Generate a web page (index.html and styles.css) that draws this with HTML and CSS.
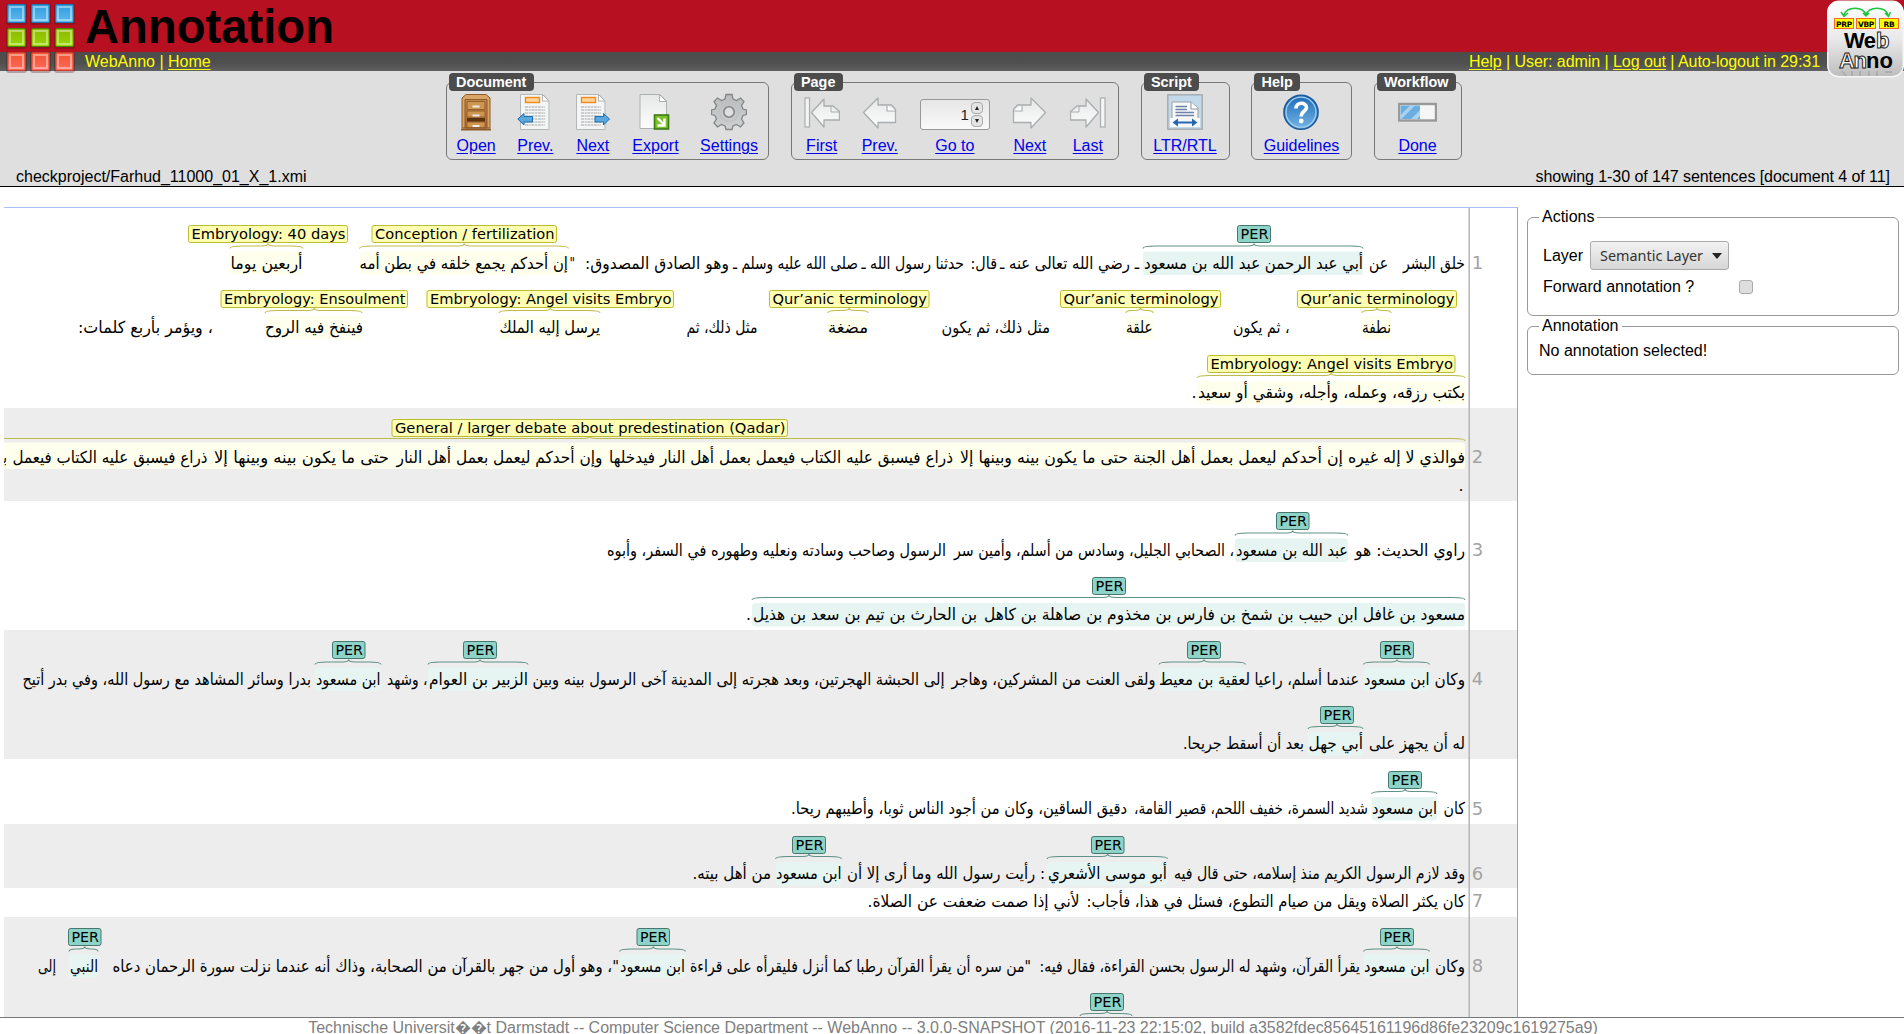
FILE: index.html
```html
<!DOCTYPE html>
<html lang="en">
<head>
<meta charset="utf-8">
<title>Annotation</title>
<link rel="stylesheet" href="styles.css">
</head>
<body>
<svg class="defs" width="0" height="0" aria-hidden="true">
  <defs>
    <linearGradient id="blue" x1="0" y1="0" x2="0" y2="1"><stop offset="0" stop-color="#2f9de0"/><stop offset="1" stop-color="#5cb8ee"/></linearGradient>
    <linearGradient id="green" x1="0" y1="0" x2="0" y2="1"><stop offset="0" stop-color="#8db800"/><stop offset="1" stop-color="#99d800"/></linearGradient>
    <linearGradient id="coral" x1="0" y1="0" x2="0" y2="1"><stop offset="0" stop-color="#f0532f"/><stop offset="1" stop-color="#ff6a5c"/></linearGradient>
    <linearGradient id="paper" x1="0" y1="0" x2="0" y2="1"><stop offset="0" stop-color="#e6e8e8"/><stop offset="1" stop-color="#fcfcfc"/></linearGradient>
    <linearGradient id="wood" x1="0" y1="0" x2="0" y2="1"><stop offset="0" stop-color="#c08a52"/><stop offset="1" stop-color="#a8662c"/></linearGradient>
    <linearGradient id="help" x1="0" y1="0" x2="0" y2="1"><stop offset="0" stop-color="#1c6ab8"/><stop offset="1" stop-color="#74b6e6"/></linearGradient>
    <linearGradient id="gear" x1="0" y1="0" x2="0" y2="1"><stop offset="0" stop-color="#b9bbbc"/><stop offset="1" stop-color="#cfd0d1"/></linearGradient>
    <linearGradient id="plate" x1="0" y1="0" x2="0" y2="1"><stop offset="0" stop-color="#fff"/><stop offset=".5" stop-color="#e9e9e9"/><stop offset="1" stop-color="#bdbdbd"/></linearGradient>
    <g id="tile"><rect x=".5" y=".5" width="18" height="18" rx="1.5"/></g>
    <g id="page-lines">
      <path d="M3.5 1.5H26L32 8V36.500H3.500Z" fill="#f4f5f5" stroke="#b4b8ba"/>
      <path d="M25.500 1.500V8H32Z" fill="#fff" stroke="#aeb2b4"/>
      <rect x="8.500" y="4.500" width="14" height="5" fill="#ffd59a" stroke="#f08a1c" stroke-width="1.400"/>
      <path d="M8 14h20M8 17h20M8 20h20M8 23h20M8 26h20M8 29h20M8 32h20" stroke="#a3a6a8" stroke-width="1.200" stroke-dasharray="3 .7 2 .7"/>
    </g>
    <g id="arrow-left"><path d="M1.500 16.500 16 2v7h13.500l4 4.500V26.500H16V32Z" fill="url(#paper)" stroke="#a9adaf" stroke-width="1.300" stroke-linejoin="round"/><path d="M25 9.500v5.500h8" fill="#fff" stroke="#a9adaf" stroke-width="1.200"/></g>
  </defs>
</svg>

<header class="titlebar">
  <svg class="grid-logo" width="76" height="76" viewBox="0 0 76 76">
    <g fill="none" stroke="#3c1418" stroke-opacity=".3" stroke-width="3">
      <use href="#tile" x="7" y="5"/><use href="#tile" x="31" y="5"/><use href="#tile" x="55" y="5"/>
      <use href="#tile" x="7" y="29"/><use href="#tile" x="31" y="29"/><use href="#tile" x="55" y="29"/>
      <use href="#tile" x="7" y="53"/><use href="#tile" x="31" y="53"/><use href="#tile" x="55" y="53"/>
    </g>
    <g fill="url(#blue)" stroke="#1878b4"><use href="#tile" x="7" y="4"/><use href="#tile" x="31" y="4"/><use href="#tile" x="55" y="4"/></g>
    <g fill="url(#green)" stroke="#4c8400"><use href="#tile" x="7" y="28"/><use href="#tile" x="31" y="28"/><use href="#tile" x="55" y="28"/></g>
    <g fill="url(#coral)" stroke="#cf3f30"><use href="#tile" x="7" y="52"/><use href="#tile" x="31" y="52"/><use href="#tile" x="55" y="52"/></g>
    <path d="M10 7h13v13h-13zM34 7h13v13h-13zM58 7h13v13h-13zM10 31h13v13h-13zM34 31h13v13h-13zM58 31h13v13h-13zM10 55h13v13h-13zM34 55h13v13h-13zM58 55h13v13h-13z" fill="none" stroke="#fff" stroke-opacity=".42" stroke-width="2"/>
  </svg>
  <h1>Annotation</h1>
  <svg class="web-logo" width="77" height="80" viewBox="0 0 77 80">
    <rect x=".8" y="1.200" width="75.500" height="75.500" rx="11" fill="url(#plate)" stroke="#f6f6f6" stroke-width="1.500"/>
    <path d="M17 15C20 6 36 6 39 15C42 6 58 6 61 15M14 12l3 4.500 4-3.500M36 13l3 3 3-3M58 13l3.500 3.500 2-4.500" fill="none" stroke="#1cc43c" stroke-width="1.400"/>
    <g fill="#ff0" stroke="#f4672a"><rect x="7.500" y="18.500" width="19" height="10"/><rect x="29.500" y="18.500" width="19" height="10"/><rect x="52.500" y="18.500" width="19" height="10"/></g>
    <g class="tag"><text x="17" y="27">PRP</text><text x="39" y="27">VBP</text><text x="62" y="27">RB</text></g>
    <g class="mark"><text x="17" y="48" textLength="32">We</text><text class="hollow" x="49" y="48" textLength="13">b</text><text class="hollow" x="12" y="68" textLength="28">An</text><text x="39" y="68" textLength="27">no</text></g>
    <path d="M15 71l4 5M25 71v5M33 71v5M42 71v5M50 71v5M58 72h7" stroke="#8f8f8f" stroke-opacity=".4" stroke-width="2"/>
  </svg>
</header>
<nav class="navbar"><span>WebAnno | <a href="#">Home</a></span><span class="session"><a href="#">Help</a> | User: admin | <a href="#">Log out</a> | Auto-logout in 29:31</span></nav>

<section class="toolbar">
  <div class="groups">
    <div class="group document"><div class="legend">Document</div>
      <a class="tool" href="#"><svg viewBox="0 0 36 38"><path d="M4 5 8 1.500H28L32 5V35H4Z" fill="#d9a566" stroke="#8f5a28"/><path d="M7 6.500H29V35H7Z" fill="url(#wood)" stroke="#8f5a28"/><path d="M9 8.500H27V16.500H9ZM9 18H27V24H9ZM9 29H27V34.500H9Z" fill="#cf9650" stroke="#975f2b"/><path d="M9 25H27V28.500H9Z" fill="#5a3210"/><path d="M14.500 13.500h7M14.500 22.500h7M14.500 33h7" stroke="#ececec" stroke-width="2.200"/><path d="M3 36.500H33" stroke="#8f5a28" stroke-width="2"/></svg><span>Open</span></a>
      <a class="tool" href="#"><svg viewBox="0 0 36 38"><use href="#page-lines"/><path d="M.8 26 7 20.500v3h8.500v5.500H7v3Z" fill="#5aa9de" stroke="#1f6cb0"/></svg><span>Prev.</span></a>
      <a class="tool" href="#"><svg viewBox="0 0 36 38"><use href="#page-lines" x="-2"/><path d="M34.500 26 28.500 20.500v3H20v5.500h8.500v3Z" fill="#5aa9de" stroke="#1f6cb0"/></svg><span>Next</span></a>
      <a class="tool" href="#"><svg viewBox="0 0 36 38"><path d="M3 1.500H23L29.500 8V35.500H3Z" fill="url(#paper)" stroke="#adb1b3"/><path d="M22.500 1.500V8.500H29.500Z" fill="#fff" stroke="#a9adaf"/><rect x="17.500" y="22" width="14" height="14" fill="#7cc02c" stroke="#3d7a14" stroke-width="1.600"/><path d="M20.500 25l6 6M27.500 25.500v7h-7" fill="none" stroke="#fff" stroke-width="2.400"/></svg><span>Export</span></a>
      <a class="tool" href="#"><svg viewBox="0 0 36 38"><path d="M15 1.500h6l1 4.500 3.500 1.500 4-2.500 3.500 3.500-2.500 4L32 16l3.500 1v4.500L32 22.500l-1.500 3.500 2.500 4-3.500 4-4-2.500-3.500 1.500-1 3.500h-6l-1-3.500-3.500-1.500-4 2.500L3 30l2.500-4L4 22.500.5 21.500V17L4 16l1.500-3.500L3 8.500 6.500 5l4 2.500L14 6Z" fill="url(#gear)" stroke="#838687" stroke-width="1.300"/><circle cx="18" cy="19" r="9.500" fill="none" stroke="#bfc1c2" stroke-width="1.500"/><circle cx="18" cy="19" r="5.200" fill="#dfdfdf" stroke="#838687" stroke-width="1.600"/></svg><span>Settings</span></a>
    </div>
    <div class="group page"><div class="legend">Page</div>
      <a class="tool" href="#"><svg viewBox="0 0 36 38"><rect x="1" y="5" width="4.500" height="29" fill="#f3f4f4" stroke="#a9adaf" stroke-width="1.200"/><path d="M7.500 19.500 20 6v7h9l6.500 5.500V27H20V34Z" fill="url(#paper)" stroke="#a9adaf" stroke-width="1.300" stroke-linejoin="round"/><path d="M27 13v6h8" fill="none" stroke="#a9adaf"/></svg><span>First</span></a>
      <a class="tool" href="#"><svg viewBox="0 0 36 38"><use href="#arrow-left" y="3"/></svg><span>Prev.</span></a>
      <a class="tool goto" href="#"><span class="number">1<span class="spin"><i class="up"></i><i class="down"></i></span></span><span>Go to</span></a>
      <a class="tool" href="#"><svg viewBox="0 0 36 38"><use href="#arrow-left" y="3" transform="translate(35 0) scale(-1 1)"/></svg><span>Next</span></a>
      <a class="tool" href="#"><svg viewBox="0 0 36 38"><rect x="30.500" y="5" width="4.500" height="29" fill="#f3f4f4" stroke="#a9adaf" stroke-width="1.200"/><path d="M28.500 19.500 16 6v7H7L.5 18.500V27H16V34Z" fill="url(#paper)" stroke="#a9adaf" stroke-width="1.300" stroke-linejoin="round"/><path d="M9 13v6H1" fill="none" stroke="#a9adaf"/></svg><span>Last</span></a>
    </div>
    <div class="group script"><div class="legend">Script</div>
      <a class="tool" href="#"><svg viewBox="0 0 36 38"><rect x=".8" y="1.800" width="34.400" height="34.400" fill="#c2d9ea" stroke="#a3a9ad" stroke-width="1.400"/><path d="M5 9H24L31 15V33.500H5Z" fill="#f8f8f8" stroke="#9aa1a6"/><path d="M24 9v7h7" fill="#fff" stroke="#8d9498"/><path d="M8.500 13.500H20M8.500 16.500H20M8.500 19.500H27M8.500 22.500H27" stroke="#6c84a8" stroke-width="1.300"/><path d="M3 29.500H33" stroke="#f8f8f8" stroke-width="9"/><path d="M9 29.500H27" stroke="#2268b2" stroke-width="2"/><path d="M5.500 29.500 11 25.500V33.500ZM30.500 29.500 25 25.500V33.500Z" fill="#2268b2"/></svg><span>LTR/RTL</span></a>
    </div>
    <div class="group guide"><div class="legend">Help</div>
      <a class="tool" href="#"><svg viewBox="0 0 36 38"><circle cx="18" cy="19.200" r="17" fill="url(#help)" stroke="#1b5a9c" stroke-width="1.600"/><circle cx="18" cy="19.200" r="15" fill="none" stroke="#a9d2f0" stroke-width="1.200"/><path d="M13 15.500C13 8.500 23.500 9 23.500 14.500C23.500 18 18.200 18.500 18.200 23.500" fill="none" stroke="#fff" stroke-width="3.600"/><circle cx="18.200" cy="28" r="2.400" fill="#fff"/></svg><span>Guidelines</span></a>
    </div>
    <div class="group workflow"><div class="legend">Workflow</div>
      <a class="tool" href="#"><svg class="wide" viewBox="0 0 39 38"><rect x="1" y="11" width="37" height="16.500" fill="#f6f6f6" stroke="#999" stroke-width="2.400"/><rect x="2.500" y="12.500" width="19.500" height="13.500" fill="#6aaedf"/><path d="M2.500 22 12 12.500h5L3.500 26h-1zM13 26 22 17v6l-3 3Z" fill="#a9d2f0"/></svg><span>Done</span></a>
    </div>
  </div>
  <div class="status"><span>checkproject/Farhud_11000_01_X_1.xmi</span><span class="range">showing 1-30 of 147 sentences [document 4 of 11]</span></div>
</section>

<main class="workspace">
  <div class="sentences" id="sentences"></div>
  <aside class="sidebar">
    <fieldset class="panel actions">
      <legend>Actions</legend>
      <div class="field"><span>Layer</span><span class="select">Semantic Layer<i></i></span></div>
      <div class="field forward"><span>Forward annotation ?</span><span class="check"></span></div>
    </fieldset>
    <fieldset class="panel detail">
      <legend>Annotation</legend>
      <div>No annotation selected!</div>
    </fieldset>
  </aside>
</main>
<footer class="footer">Technische Universit&#xFFFD;&#xFFFD;t Darmstadt -- Computer Science Department -- WebAnno -- 3.0.0-SNAPSHOT (2016-11-23 22:15:02, build a3582fdec85645161196d86fe23209c1619275a9)</footer>
<script src="app.js"></script>
</body>
</html>
```
FILE: styles.css
```css
* { box-sizing: border-box; }
body {
  margin: 0;
  height: 1034px;
  overflow: hidden;
  display: flex;
  flex-direction: column;
  background: #fff;
  color: #000;
  font: 16px/18px "Liberation Sans", Arial, sans-serif;
}
.defs { position: absolute; }

.titlebar { position: relative; flex: none; height: 52px; padding-left: 85px; background: #b71021; }
.titlebar h1 { margin: 0; font-size: 47.2px; line-height: 53px; font-weight: bold; }
.grid-logo { position: absolute; left: 0; top: 0; z-index: 2; }
.web-logo { position: absolute; right: 0; top: 0; z-index: 2; }
.web-logo .tag text { font: bold 7.5px "DejaVu Sans", sans-serif; text-anchor: middle; letter-spacing: -0.3px; }
.web-logo .mark text { font: bold 22px "Liberation Sans", sans-serif; }
.web-logo .mark .hollow { fill: #fff; stroke: #222; stroke-width: 1px; }

.navbar {
  flex: none;
  display: flex;
  justify-content: space-between;
  height: 19px;
  padding: 0 84px 0 85px;
  background: linear-gradient(#4c4c4c, #505050 60%, #606060);
  color: #ff0;
  line-height: 19px;
}
.navbar a { color: #ff0; text-underline-offset: 2px; }
.session { letter-spacing: -0.06px; }

.toolbar {
  flex: none;
  display: flex;
  flex-direction: column;
  justify-content: space-between;
  height: 116px;
  padding-top: 11px;
  background: #dfdfdf;
  border-bottom: 1px solid #000;
}
.groups { display: flex; justify-content: center; gap: 21.5px; padding-left: 3px; }
.group {
  position: relative;
  display: flex;
  justify-content: center;
  gap: 21.5px;
  height: 78px;
  padding-top: 10px;
  border: 1px solid #777;
  border-radius: 6px;
}
.document { width: 323.5px; }
.page { width: 328.5px; gap: 22px; }
.script { width: 89px; }
.guide { width: 101px; }
.workflow { width: 88px; }
.legend {
  position: absolute;
  left: 2px;
  top: -10px;
  height: 18px;
  padding: 0 7.5px;
  border-radius: 4px;
  background: #4c4c4c;
  color: #fff;
  font-weight: bold;
  font-size: 14.4px;
  line-height: 18px;
}
.tool { display: flex; flex-direction: column; align-items: center; color: #00e; text-decoration: none; }
.tool > span:last-child { text-decoration: underline; text-underline-offset: 2px; }
.tool svg { display: block; width: 36px; height: 38px; margin-bottom: 6px; }
.tool svg.wide { width: 39px; }
.number {
  display: flex;
  align-items: center;
  justify-content: flex-end;
  gap: 2px;
  width: 70px;
  height: 31px;
  margin: 6px 0 7px;
  padding-right: 6px;
  border: 1px solid #999;
  border-radius: 3px;
  background: linear-gradient(#e6e6e6, #fafafa);
  color: #222;
  font-size: 15px;
}
.spin { display: flex; flex-direction: column; gap: 1px; }
.spin i { display: flex; align-items: center; justify-content: center; width: 12px; height: 12px; border: 1px solid #aaa; border-radius: 4px; background: #e4e4e4; }
.spin i::after { content: ""; border: 2.5px solid transparent; }
.spin .up::after { border-bottom: 4px solid #222; border-top: 0; }
.spin .down::after { border-top: 4px solid #222; border-bottom: 0; }
.status { display: flex; justify-content: space-between; padding: 0 14px 0 16px; }
.range { letter-spacing: -0.06px; }

.workspace { flex: 1; min-height: 0; display: flex; gap: 9px; padding: 20px 5px 0 4px; }
.sentences {
  width: 1514px;
  overflow: hidden;
  border-top: 1px solid #a8c0f4;
  border-right: 1px solid #84a6f0;
}
.row { display: block; width: 1513px; overflow: hidden; background: #fff; }
.row.shaded { background: #ededed; }
.row .word { direction: rtl; font: 16.5px "DejaVu Sans", sans-serif; fill: #000; }
.row .num { font: 18px "DejaVu Sans", sans-serif; fill: #a3a3a3; }
.row .tag { font: 13.33px "DejaVu Sans", sans-serif; text-anchor: middle; }
.row .rule { stroke: #b4b4b4; stroke-width: 1.5; }
.per .box { fill: #8dd3c7; stroke: #46786f; }
.per .brace { stroke: #5f9187; }
.per .back { fill: #e6f5f2; }
.sem .box { fill: #ffffb3; stroke: #bcbc2c; }
.sem .brace { stroke: #bcbc4a; }
.sem .back { fill: #ffffee; }
.brace { fill: none; stroke-width: 1.1; }

.sidebar { flex: 1; padding-top: 1px; }
.panel { margin: 0; border: 1px solid #999; border-radius: 6px; min-width: 0; }
.panel legend { padding: 0 3px; margin-left: 0; line-height: 18px; }
.actions { height: 108px; padding: 15px 15px 0 11px; }
.field { display: flex; align-items: center; gap: 7px; height: 29px; padding-left: 4px; }
.forward { height: 34px; gap: 45px; }
.select {
  display: flex;
  align-items: center;
  gap: 9px;
  width: 139px;
  height: 29px;
  padding-left: 9px;
  border: 1px solid #aaa;
  border-radius: 3px;
  background: linear-gradient(#f2f2f2, #d6d6d6);
  color: #333;
  font: 14.4px "Noto Sans", "Open Sans", sans-serif;
}
.select i { border: 5px solid transparent; border-top: 6px solid #222; border-bottom: 0; }
.check { width: 14px; height: 14px; border: 1px solid #aaa; border-radius: 3px; background: #dedede; }
.detail { height: 58px; margin-top: 1px; padding: 7px 11px 0; }

.footer { flex: none; height: 17px; border-top: 1px solid #777; color: #808080; text-align: center; line-height: 19px; background: #fff; padding-left: 2px; letter-spacing: -0.015px; }
```
FILE: app.js
```js
// Each row: height, baseline, sentence number, shading, words [text, left, right]
// and spans [kind, left, right, boxLeft, boxRight, label].
const rows = [
  { h: 71, b: 61, n: 1, words: [
    ['خلق البشر', 1403, 1465], ['عن', 1369, 1388], ['أبي عبد الرحمن عبد الله بن مسعود', 1144, 1363],
    ['ـ رضي الله تعالى عنه ـ', 1000, 1139], ['قال:', 970.5, 997], ['حدثنا رسول الله ـ', 861.5, 964],
    ['صلى الله عليه وسلم ـ', 733, 858], ['وهو الصادق المصدوق:', 585, 729], ['"', 569.5, 575],
    ['إن أحدكم يجمع خلقه في بطن أمه', 359.5, 568], ['أربعين يوما', 230.5, 302.5]],
    spans: [['per', 1143, 1363, 1237, 1271, 'PER'], ['sem', 359.5, 568.5, 371.5, 557, 'Conception / fertilization'],
      ['sem', 230, 303, 188, 348, 'Embryology: 40 days']] },
  { h: 65, b: 54.5, words: [
    ['نطفة', 1362, 1391], ['، ثم يكون', 1233, 1289.5], ['علقة', 1126, 1152.5], ['مثل ذلك، ثم يكون', 941.5, 1050],
    ['مضغة', 828, 868], ['مثل ذلك، ثم', 686.5, 757.5], ['يرسل إليه الملك', 499.5, 600],
    ['فينفخ فيه الروح', 265, 363], ['، ويؤمر بأربع كلمات:', 78, 213]],
    spans: [['sem', 1362, 1391, 1297, 1457, 'Qur’anic terminology'], ['sem', 1126, 1153, 1060, 1221, 'Qur’anic terminology'],
      ['sem', 828, 868, 769, 929.5, 'Qur’anic terminology'], ['sem', 499, 600, 426.5, 674, 'Embryology: Angel visits Embryo'],
      ['sem', 265, 362, 220.5, 408, 'Embryology: Ensoulment']] },
  { h: 64, b: 54.5, words: [['بكتب رزقه، وعمله، وأجله، وشقي أو سعيد', 1198, 1465], ['.', 1191.5, 1196.5]],
    spans: [['sem', 1197, 1465, 1207, 1455.5, 'Embryology: Angel visits Embryo']] },
  { h: 65, b: 55, n: 2, shaded: 1, words: [
    ['فوالذي لا إله غيره إن أحدكم ليعمل بعمل أهل الجنة حتى ما يكون بينه وبينها إلا', 960, 1465],
    ['ذراع فيسبق عليه الكتاب فيعمل بعمل أهل النار فيدخلها', 609, 953],
    ['وإن أحدكم ليعمل بعمل أهل النار', 396.5, 602.5], ['حتى ما يكون بينه وبينها إلا', 214, 389],
    ['ذراع فيسبق عليه الكتاب فيعمل', 12.5, 207.5], ['بعمل', -22, 7]],
    spans: [['sem', -286, 1465, 391.5, 788, 'General / larger debate about predestination (Qadar)', 3]] },
  { h: 28, b: 18.5, shaded: 1, words: [['.', 1458.5, 1463.5]] },
  { h: 65, b: 55, n: 3, words: [
    ['راوي الحديث: هو', 1355, 1465], ['عبد الله بن مسعود', 1236, 1348],
    ['، الصحابي الجليل، وسادس من أسلم، وأمين سر', 954, 1234],
    ['الرسول وصاحب وسادته ونعليه وطهوره في السفر، وأبوه', 607, 946]],
    spans: [['per', 1235, 1348, 1276, 1309.5, 'PER']] },
  { h: 64, b: 54.5, words: [
    ['مسعود بن غافل ابن حبيب بن شمخ بن فارس بن مخذوم بن صاهلة بن كاهل', 984, 1465],
    ['بن الحارث بن تيم بن سعد بن هذيل', 753, 977], ['.', 746, 751]],
    spans: [['per', 752, 1465, 1092, 1126, 'PER']] },
  { h: 65, b: 55, n: 4, shaded: 1, words: [
    ['وكان', 1434.5, 1465], ['ابن مسعود', 1364, 1429.5], ['عندما أسلم، راعيا', 1254.5, 1359],
    ['لعقية بن معيط', 1159, 1250], ['ولقى العنت من المشركين، وهاجر', 951.5, 1155.5],
    ['إلى الحبشة الهجرتين، وبعد هجرته إلى المدينة آخى الرسول بينه وبين', 532.5, 944.5],
    ['الزبير بن العوام', 429, 528], ['، وشهد', 387, 427.5], ['ابن مسعود', 316, 380.5],
    ['بدرا وسائر المشاهد مع رسول الله، وفي بدر أتيح', 22.5, 311]],
    spans: [['per', 1363.5, 1429.5, 1380, 1414, 'PER'], ['per', 1159, 1245.5, 1187, 1221, 'PER'],
      ['per', 428, 528, 463, 497, 'PER'], ['per', 315, 381, 332, 365.5, 'PER']] },
  { h: 64, b: 54.5, shaded: 1, words: [
    ['له أن يجهز على', 1369, 1465], ['أبي جهل', 1308.5, 1363], ['بعد أن أسقط جريحا.', 1183, 1304]],
    spans: [['per', 1308, 1363, 1320, 1354, 'PER']] },
  { h: 65, b: 55.5, n: 5, words: [
    ['كان', 1443.5, 1465], ['ابن مسعود', 1372, 1437], ['شديد السمرة، خفيف اللحم، قصير القامة،', 1134, 1368],
    ['دقيق الساقين، وكان من أجود الناس ثوبا، وأطيبهم ريحا.', 791, 1127]],
    spans: [['per', 1371.5, 1437, 1388, 1422, 'PER']] },
  { h: 64, b: 55.5, n: 6, shaded: 1, words: [
    ['وقد لازم الرسول الكريم منذ إسلامه، حتى قال فيه', 1174, 1465], ['أبو موسى الأشعري', 1048, 1167],
    [': رأيت رسول الله وما أرى إلا أن', 847, 1045], ['ابن مسعود', 776, 841.5], ['من أهل بيته.', 692.5, 771]],
    spans: [['per', 1047, 1167.5, 1091, 1124.5, 'PER'], ['per', 775.5, 841.5, 792, 826, 'PER']] },
  { h: 29, b: 19, n: 7, words: [
    ['كان يكثر الصلاة ويقل من صيام التطوع، فسئل في هذا، فأجاب:', 1086.5, 1465],
    ['لأني إذا صمت ضعفت عن الصلاة.', 867.5, 1079.5]] },
  { h: 65, b: 55, n: 8, shaded: 1, words: [
    ['وكان', 1435, 1465], ['ابن مسعود', 1364, 1429.5], ['يقرأ القرآن، وشهد له الرسول بحسن القراءة، فقال فيه:', 1039.5, 1360],
    ['"من سره أن يقرأ القرآن رطبا كما أنزل فليقرأه على قراءة', 690, 1031], ['ابن مسعود', 620, 685],
    ['"، وهو أول من جهر بالقرآن من الصحابة، وذاك أنه عندما نزلت سورة الرحمان دعاه', 112.5, 619],
    ['النبي', 70, 98], ['إلى', 38, 56]],
    spans: [['per', 1363.5, 1429.5, 1380, 1414, 'PER'], ['per', 619.5, 685.5, 636.5, 670, 'PER'], ['per', 69, 98, 68, 101.5, 'PER']] },
  { h: 40, b: 54.5, shaded: 1, words: [], spans: [['per', 1080, 1132, 1090, 1124, 'PER']] }
];

function drawSpan([kind, l, r, bl, br, label, lift = 0], b) {
  const c = (bl + br) / 2, t = b - 20.5 - lift / 2, w = Math.min(12, (r - l) / 5);
  const top = Math.floor(b - 43.5);
  return `<g class="${kind}">
    <rect class="back" x="${l}" y="${b - 17.5 - lift}" width="${r - l}" height="${23.5 + lift}" rx="3"/>
    <path class="brace" d="M${l} ${t}Q${l} ${t - 2.5} ${l + w} ${t - 2.5}H${c - 6}Q${c} ${t - 2.5} ${c} ${t - 5}Q${c} ${t - 2.5} ${c + 6} ${t - 2.5}H${r - w}Q${r} ${t - 2.5} ${r} ${t}"/>
    <rect class="box" x="${bl + .5}" y="${top + .5}" width="${br - bl - 1}" height="17" rx="2"/>
    <text class="tag" x="${c + .5}" y="${top + 13.5}" textLength="${br - bl - 6}" lengthAdjust="spacingAndGlyphs">${label}</text>
  </g>`;
}

document.getElementById('sentences').innerHTML = rows.map(row => `
  <svg class="row${row.shaded ? ' shaded' : ''}" height="${row.h}" viewBox="4 0 1513 ${row.h}">
    ${(row.spans || []).map(s => drawSpan(s, row.b)).join('')}
    ${row.words.map(([t, l, r]) => `<text class="word" x="${r}" y="${row.b - .3}" textLength="${r - l}" lengthAdjust="spacingAndGlyphs">${t}</text>`).join('')}
    <path class="rule" d="M1469.2 0V${row.h}"/>
    ${row.n ? `<text class="num" x="1471.8" y="${row.b}">${row.n}</text>` : ''}
  </svg>`).join('');
```
